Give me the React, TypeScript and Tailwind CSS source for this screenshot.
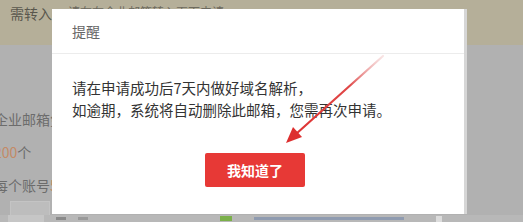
import React from 'react';

const font = { fontFamily: '"Noto Sans CJK SC", "Liberation Sans", sans-serif' };

const Arrow = () => (
  <svg className="absolute left-0 top-0" width="523" height="222" viewBox="0 0 523 222">
    <defs>
      <linearGradient id="ar" x1="383" y1="56" x2="287" y2="142" gradientUnits="userSpaceOnUse">
        <stop offset="0" stopColor="#e9a8a8" stopOpacity="0.3" />
        <stop offset="0.35" stopColor="#e04848" />
        <stop offset="1" stopColor="#dd2f2f" />
      </linearGradient>
    </defs>
    <line x1="383" y1="56" x2="296" y2="134" stroke="url(#ar)" strokeWidth="2.2" strokeLinecap="round" />
    <polygon points="286,143 293,127 302,137" fill="#dd2f2f" />
  </svg>
);

export default function App() {
  return (
    <div className="relative h-[222px] w-[523px] overflow-hidden bg-[#b1b1b1]" style={font}>
      {/* page behind the overlay */}
      <div className="flex h-[45px] bg-[#b5af99] px-[10px] pt-[3px] text-[14px] text-[#59574d]">
        <span>需转入，</span>
        <span className="ml-[2px] text-[12px] text-[#6d6a5e]">请在在企业邮箱转入页面申请</span>
      </div>
      <div className="-ml-[6px] flex flex-col text-[14px] text-[#6c6c6c]">
        <div className="mt-[64px] leading-[20px]">企业邮箱免</div>
        <div className="mt-[13px] leading-[20px]">
          <span className="text-[#c48a66]">200</span>个
        </div>
        <div className="mt-[13px] leading-[20px]">
          每个账号<span className="text-[#c48a66]">5G</span>
        </div>
        <div className="ml-[16px] mt-[6px] h-[20px] w-[40px] border border-[#c4c4c4] bg-[#bdbdbd]" />
      </div>
      <div className="absolute bottom-0 left-0 flex h-[7px] w-[523px] items-center gap-[12px] bg-[#b8b8b8] px-[8px]">
        <div className="h-[7px] w-[36px] bg-[#c6c6c6]" />
        <div className="h-[3px] w-[10px] bg-[#8a8a8a]" />
        <div className="h-[3px] w-[10px] bg-[#9a9a9a]" />
        <div className="ml-[120px] h-[5px] w-[12px] bg-[#7bb04a]" />
        <div className="ml-[10px] h-[3px] w-[150px] bg-[#8f9bb0]" />
        <div className="ml-[20px] h-[6px] w-[6px] bg-[#dcdcdc]" />
      </div>

      {/* modal */}
      <div className="absolute left-[52px] top-[9px] flex h-[205px] w-[412px] flex-col bg-white shadow-[3px_0_0_#d6d6d6]">
        <div className="flex h-[45px] items-center border-b border-[#ececec] pl-[20px] text-[14px] text-[#666]">
          提醒
        </div>
        <div className="px-[20px] pt-[23px] text-[14.5px] leading-[22px] text-[#333]">
          <p>请在申请成功后7天内做好域名解析，</p>
          <p>如逾期，系统将自动删除此邮箱，您需再次申请。</p>
        </div>
        <div className="mt-[32px] flex justify-center pr-[6px]">
          <button
            type="button"
            className="h-[34px] w-[100px] rounded-[2px] bg-[#e73936] text-[14px] font-bold text-white"
          >
            我知道了
          </button>
        </div>
      </div>
      <Arrow />
    </div>
  );
}
